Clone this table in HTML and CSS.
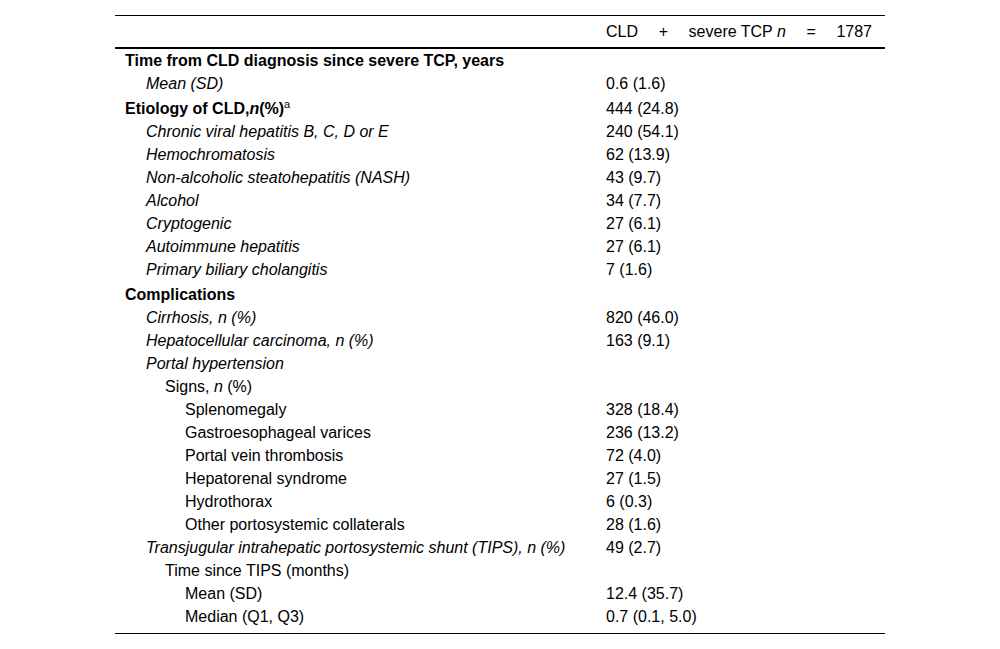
FILE: index.html
```html
<!DOCTYPE html>
<html>
<head>
<meta charset="utf-8">
<link rel="stylesheet" href="styles.css">
</head>
<body>
<table class="tbl">
  <colgroup>
    <col class="c-lab">
    <col class="c-val">
  </colgroup>
  <thead>
    <tr>
      <th class="lab"></th>
      <th class="val"><div class="hdr"><span>CLD</span><span>+</span><span>severe TCP <i>n</i></span><span>=</span><span>1787</span></div></th>
    </tr>
  </thead>
  <tbody>
    <tr class="sec first"><td class="lab b">Time from CLD diagnosis since severe TCP, years</td><td class="val"></td></tr>
    <tr><td class="lab i1 it">Mean (SD)</td><td class="val">0.6 (1.6)</td></tr>
    <tr class="sec"><td class="lab b">Etiology of CLD,<i>n</i>(%)<sup>a</sup></td><td class="val">444 (24.8)</td></tr>
    <tr><td class="lab i1 it">Chronic viral hepatitis B, C, D or E</td><td class="val">240 (54.1)</td></tr>
    <tr><td class="lab i1 it">Hemochromatosis</td><td class="val">62 (13.9)</td></tr>
    <tr><td class="lab i1 it">Non-alcoholic steatohepatitis (NASH)</td><td class="val">43 (9.7)</td></tr>
    <tr><td class="lab i1 it">Alcohol</td><td class="val">34 (7.7)</td></tr>
    <tr><td class="lab i1 it">Cryptogenic</td><td class="val">27 (6.1)</td></tr>
    <tr><td class="lab i1 it">Autoimmune hepatitis</td><td class="val">27 (6.1)</td></tr>
    <tr><td class="lab i1 it">Primary biliary cholangitis</td><td class="val">7 (1.6)</td></tr>
    <tr class="sec"><td class="lab b">Complications</td><td class="val"></td></tr>
    <tr><td class="lab i1 it">Cirrhosis, n (%)</td><td class="val">820 (46.0)</td></tr>
    <tr><td class="lab i1 it">Hepatocellular carcinoma, n (%)</td><td class="val">163 (9.1)</td></tr>
    <tr><td class="lab i1 it">Portal hypertension</td><td class="val"></td></tr>
    <tr><td class="lab i2">Signs, <i>n</i> (%)</td><td class="val"></td></tr>
    <tr><td class="lab i3">Splenomegaly</td><td class="val">328 (18.4)</td></tr>
    <tr><td class="lab i3">Gastroesophageal varices</td><td class="val">236 (13.2)</td></tr>
    <tr><td class="lab i3">Portal vein thrombosis</td><td class="val">72 (4.0)</td></tr>
    <tr><td class="lab i3">Hepatorenal syndrome</td><td class="val">27 (1.5)</td></tr>
    <tr><td class="lab i3">Hydrothorax</td><td class="val">6 (0.3)</td></tr>
    <tr><td class="lab i3">Other portosystemic collaterals</td><td class="val">28 (1.6)</td></tr>
    <tr><td class="lab i1 it">Transjugular intrahepatic portosystemic shunt (TIPS), n (%)</td><td class="val">49 (2.7)</td></tr>
    <tr><td class="lab i2">Time since TIPS (months)</td><td class="val"></td></tr>
    <tr><td class="lab i3">Mean (SD)</td><td class="val">12.4 (35.7)</td></tr>
    <tr class="last"><td class="lab i3">Median (Q1, Q3)</td><td class="val">0.7 (0.1, 5.0)</td></tr>
  </tbody>
</table>
</body>
</html>
```
FILE: styles.css
```css
html, body {
  margin: 0;
  padding: 0;
  background: #fff;
}
body {
  font-family: "Liberation Sans", Arial, sans-serif;
  font-size: 16px;
  color: #000;
}
.tbl {
  margin: 15px 0 0 115px;
  width: 770px;
  table-layout: fixed;
  border-collapse: collapse;
  border-top: 1px solid #000;
  border-bottom: 1px solid #000;
}
.c-lab { width: 481px; }
.c-val { width: 289px; }
.tbl th, .tbl td {
  padding: 3px 0;
  line-height: 17px;
  text-align: left;
  vertical-align: top;
  font-weight: normal;
}
.tbl thead th {
  padding: 7px 0;
  border-bottom: 2px solid #000;
}
.tbl .lab {
  padding-left: 10px;
  white-space: nowrap;
}
.tbl .val {
  padding-left: 10px;
  padding-right: 13px;
  white-space: nowrap;
}
.hdr {
  display: flex;
  justify-content: space-between;
}
.tbl .b { font-weight: bold; }
.tbl .it { font-style: italic; }
.tbl .i1 { padding-left: 31px; }
.tbl .i2 { padding-left: 50px; }
.tbl .i3 { padding-left: 70px; }
.tbl .sec td { padding-top: 5px; }
.tbl .sec.first td { padding-top: 3px; }
.tbl .last td { padding-bottom: 8px; }
sup {
  font-size: 11px;
  line-height: 0;
  vertical-align: 6px;
  font-weight: normal;
}
```
